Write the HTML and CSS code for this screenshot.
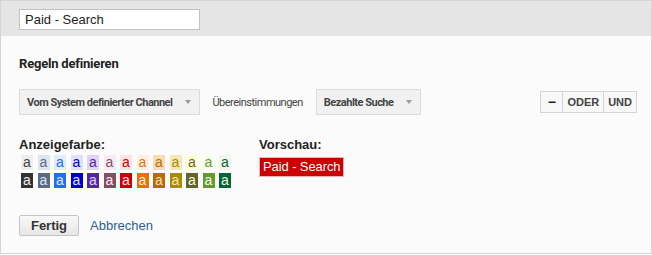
FILE: index.html
```html
<!DOCTYPE html>
<html lang="de">
<head>
    <meta charset="UTF-8">
    <title>Channel-Gruppierung</title>
    <link rel="stylesheet" href="styles.css">
</head>
<body>

    <div class="channel-editor">
        <!-- Name -->
        <div class="name-bar">
            <input type="text" class="name-input" value="Paid - Search">
        </div>

        <div class="editor-body">
            <h2>Regeln definieren</h2>

            <!-- Rule row -->
            <div class="rule-row">
                <div class="dropdown">Vom System definierter Channel <span class="arrow"></span></div>
                <span class="match-label">Übereinstimmungen</span>
                <div class="dropdown">Bezahlte Suche <span class="arrow"></span></div>
                <div class="rule-buttons">
                    <button class="rule-btn">&minus;</button>
                    <button class="rule-btn">ODER</button>
                    <button class="rule-btn">UND</button>
                </div>
            </div>

            <!-- Colour + preview -->
            <div class="color-section">
                <div class="color-picker">
                    <div class="section-label">Anzeigefarbe:</div>
                    <div class="swatch-row">
                        <span class="swatch" style="background:#eeeeee;color:#444444">a</span>
                        <span class="swatch" style="background:#dee5f2;color:#5a6986">a</span>
                        <span class="swatch" style="background:#e0ecff;color:#206cff">a</span>
                        <span class="swatch" style="background:#dfe2ff;color:#0000cc">a</span>
                        <span class="swatch" style="background:#e0d5f9;color:#5229a3">a</span>
                        <span class="swatch" style="background:#fde9f4;color:#854f61">a</span>
                        <span class="swatch" style="background:#ffe3e3;color:#cc0000">a</span>
                        <span class="swatch" style="background:#fff0e1;color:#ec7000">a</span>
                        <span class="swatch" style="background:#fadcb3;color:#b36d00">a</span>
                        <span class="swatch" style="background:#f3e7b3;color:#ab8b00">a</span>
                        <span class="swatch" style="background:#ffffd4;color:#636330">a</span>
                        <span class="swatch" style="background:#f9ffef;color:#64992c">a</span>
                        <span class="swatch" style="background:#f1f5ec;color:#006633">a</span>
                    </div>
                    <div class="swatch-row">
                        <span class="swatch" style="background:#333333;color:#eeeeee">a</span>
                        <span class="swatch" style="background:#5a6986;color:#dee5f2">a</span>
                        <span class="swatch" style="background:#206cff;color:#e0ecff">a</span>
                        <span class="swatch" style="background:#0000cc;color:#dfe2ff">a</span>
                        <span class="swatch" style="background:#5229a3;color:#e0d5f9">a</span>
                        <span class="swatch" style="background:#854f61;color:#fde9f4">a</span>
                        <span class="swatch" style="background:#cc0000;color:#ffe3e3">a</span>
                        <span class="swatch" style="background:#ec7000;color:#fff0e1">a</span>
                        <span class="swatch" style="background:#b36d00;color:#fadcb3">a</span>
                        <span class="swatch" style="background:#ab8b00;color:#f3e7b3">a</span>
                        <span class="swatch" style="background:#636330;color:#ffffd4">a</span>
                        <span class="swatch" style="background:#64992c;color:#f9ffef">a</span>
                        <span class="swatch" style="background:#006633;color:#f1f5ec">a</span>
                    </div>
                </div>

                <div class="preview">
                    <div class="section-label">Vorschau:</div>
                    <span class="preview-tag">Paid - Search</span>
                </div>
            </div>

            <!-- Actions -->
            <div class="editor-actions">
                <button class="done-btn">Fertig</button>
                <a href="#" class="cancel-link">Abbrechen</a>
            </div>
        </div>
    </div>

</body>
</html>
```

FILE: styles.css
```css
body {
    margin: 0;
    font-family: Arial, "Liberation Sans", sans-serif;
    color: #222;
}

.channel-editor {
    width: 652px;
    height: 254px;
    box-sizing: border-box;
    border: 1px solid #d4d4d4;
    background-color: #fbfbfb;
}

.name-bar {
    background-color: #e5e5e5;
    height: 35px;
    padding: 8px 0 0 18px;
    box-sizing: border-box;
}

.name-input {
    width: 181px;
    height: 21px;
    box-sizing: border-box;
    border: 1px solid #c2c2c2;
    padding: 0 5px;
    margin: 0;
    font-family: Arial, "Liberation Sans", sans-serif;
    font-size: 13px;
    color: #222;
    background-color: white;
    outline: none;
}

.editor-body {
    padding: 0 18px;
}

h2 {
    font-family: Roboto, Arial, sans-serif;
    font-size: 13px;
    font-weight: bold;
    line-height: 15px;
    letter-spacing: -0.2px;
    color: #222;
    margin: 20px 0 0 0;
}

.rule-row {
    display: flex;
    align-items: center;
    margin-top: 18px;
    margin-right: -4px;
}

.dropdown {
    display: flex;
    align-items: center;
    height: 26px;
    box-sizing: border-box;
    padding: 0 8px 0 7px;
    border: 1px solid #dcdcdc;
    background-color: #f1f1f1;
    font-family: Roboto, Arial, sans-serif;
    font-size: 11px;
    font-weight: bold;
    letter-spacing: -0.5px;
    color: #444;
}

.arrow {
    width: 0;
    height: 0;
    margin-left: 13px;
    border-left: 3.5px solid transparent;
    border-right: 3.5px solid transparent;
    border-top: 4px solid #999;
}

.match-label {
    font-family: Roboto, Arial, sans-serif;
    font-size: 11px;
    letter-spacing: -0.5px;
    color: #444;
    margin: 0 13px 0 12px;
}

.rule-buttons {
    display: flex;
    margin-left: auto;
}

.rule-btn {
    height: 22px;
    box-sizing: border-box;
    border: 1px solid #d4d4d4;
    margin-left: -1px;
    padding: 0 4px;
    background-color: #f8f8f8;
    font-family: Arial, "Liberation Sans", sans-serif;
    font-size: 11px;
    font-weight: bold;
    color: #444;
}

.rule-btn:first-child {
    width: 23px;
    font-size: 14px;
    color: #222;
}

.color-section {
    display: flex;
    margin-top: 22px;
}

.color-picker {
    width: 240px;
}

.section-label {
    font-size: 13px;
    font-weight: bold;
    line-height: 15px;
    color: #222;
    margin-bottom: 3px;
}

.swatch-row {
    display: flex;
    gap: 4.5px;
    padding-left: 2px;
    margin-bottom: 3px;
}

.swatch {
    width: 12px;
    height: 15px;
    font-size: 14px;
    line-height: 14px;
    text-align: center;
}

.preview-tag {
    display: inline-block;
    margin-top: 2px;
    padding: 0 3px;
    height: 18px;
    line-height: 18px;
    border: 1px solid #eeb0b0;
    background-color: #cc0000;
    color: white;
    font-size: 13px;
    letter-spacing: -0.1px;
}

.editor-actions {
    display: flex;
    align-items: center;
    margin-top: 24px;
}

.done-btn {
    width: 60px;
    height: 21px;
    box-sizing: border-box;
    border: 1px solid #c4c4c4;
    border-radius: 2px;
    background: linear-gradient(#f9f9f9, #e6e6e6);
    font-family: Arial, "Liberation Sans", sans-serif;
    font-size: 13px;
    font-weight: bold;
    color: #333;
    padding: 0;
    cursor: pointer;
}

.cancel-link {
    margin-left: 11px;
    font-size: 13px;
    color: #2c5d94;
    text-decoration: none;
}
```
